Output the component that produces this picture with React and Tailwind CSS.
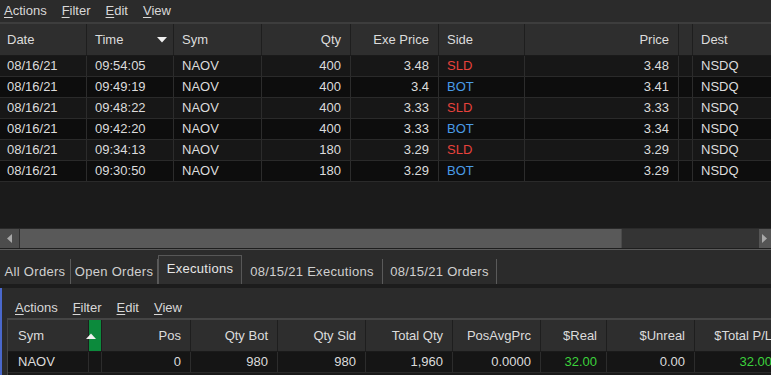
import React from "react";

const topRows = [
  ["08/16/21", "09:54:05", "NAOV", "400", "3.48", "SLD", "3.48", "NSDQ"],
  ["08/16/21", "09:49:19", "NAOV", "400", "3.4", "BOT", "3.41", "NSDQ"],
  ["08/16/21", "09:48:22", "NAOV", "400", "3.33", "SLD", "3.33", "NSDQ"],
  ["08/16/21", "09:42:20", "NAOV", "400", "3.33", "BOT", "3.34", "NSDQ"],
  ["08/16/21", "09:34:13", "NAOV", "180", "3.29", "SLD", "3.29", "NSDQ"],
  ["08/16/21", "09:30:50", "NAOV", "180", "3.29", "BOT", "3.29", "NSDQ"],
];

const tabs = [
  { label: "All Orders", w: "w-[71px]" },
  { label: "Open Orders", w: "w-[87px]" },
  { label: "Executions", w: "w-[84px]", active: true },
  { label: "08/15/21 Executions", w: "w-[141px]" },
  { label: "08/15/21 Orders", w: "w-[114px]" },
];

function Menu({ className = "" }) {
  return (
    <div className={"flex items-center gap-[15px] text-[#d8d8d8] " + className}>
      <span><span className="underline underline-offset-2">A</span>ctions</span>
      <span><span className="underline underline-offset-2">F</span>ilter</span>
      <span><span className="underline underline-offset-2">E</span>dit</span>
      <span><span className="underline underline-offset-2">V</span>iew</span>
    </div>
  );
}

function Cell({ children, right, className = "" }) {
  return (
    <div
      className={
        "flex items-center overflow-hidden whitespace-nowrap border-r border-[#1e1e1e] " +
        (right ? "justify-end pr-[9px] " : "pl-[8px] ") +
        className
      }
    >
      {children}
    </div>
  );
}

export default function App() {
  return (
    <div className="w-[771px] h-[375px] overflow-hidden bg-[#1b1b1b] text-[13px] text-[#dcdcdc] font-['Liberation_Sans',Arial,sans-serif] flex flex-col">
      {/* top panel */}
      <div className="h-[248px] flex flex-col">
        <Menu className="h-[22px] bg-[#2b2b2b] pl-[4px]" />
        <div className="h-[2px] bg-[#3d3d3d]" />

        {/* header */}
        <div className="h-[32px] grid grid-cols-[87px_87px_88px_89px_88px_86px_154px_14px_82px] bg-[#2e2e2e] border-b border-[#1a1a1a]">
          <Cell className="!pl-[7px]">Date</Cell>
          <Cell className="justify-between pr-[6px]">
            <span>Time</span>
            <svg width="10" height="6" viewBox="0 0 10 6">
              <path d="M0 0H10L5 5.5Z" fill="#f0f0f0" />
            </svg>
          </Cell>
          <Cell>Sym</Cell>
          <Cell right>Qty</Cell>
          <Cell right>Exe Price</Cell>
          <Cell>Side</Cell>
          <Cell right>Price</Cell>
          <Cell />
          <Cell className="border-r-0">Dest</Cell>
        </div>

        {/* rows */}
        {topRows.map((r, i) => (
          <div
            key={i}
            className={
              "h-[21px] grid grid-cols-[87px_87px_88px_89px_88px_86px_154px_14px_82px] border-b border-[#2a2a2a] " +
              (i % 2 === 0 ? "bg-[#171717]" : "bg-[#0d0d0d]")
            }
          >
            <Cell className="!pl-[7px] !border-[#2c2c2c]">{r[0]}</Cell>
            <Cell className="!border-[#2c2c2c]">{r[1]}</Cell>
            <Cell className="!border-[#2c2c2c]">{r[2]}</Cell>
            <Cell right className="!border-[#2c2c2c]">{r[3]}</Cell>
            <Cell right className="!border-[#2c2c2c]">{r[4]}</Cell>
            <Cell
              className={
                "!border-[#2c2c2c] " +
                (r[5] === "SLD" ? "text-[#e8423c]" : "text-[#4a9ce8]")
              }
            >
              {r[5]}
            </Cell>
            <Cell right className="!border-[#2c2c2c]">{r[6]}</Cell>
            <Cell className="!border-[#2c2c2c]" />
            <Cell className="border-r-0">{r[7]}</Cell>
          </div>
        ))}

        <div className="flex-1 bg-[#1b1b1b]" />

        {/* horizontal scrollbar */}
        <div className="h-[20px] flex bg-[#343434] border-t border-[#2a2a2a]">
          <div className="w-[20px] bg-[#4c4c4c] border-r border-[#2e2e2e] flex items-center justify-center">
            <svg width="6" height="9" viewBox="0 0 6 9">
              <path d="M5 0V9L0 4.5Z" fill="#a8a8a8" />
            </svg>
          </div>
          <div className="w-[602px] bg-[#595959] border-r border-[#4a4a4a]" />
          <div className="flex-1" />
          <div className="w-[12px] bg-[#555] flex items-center pl-[3px]">
            <svg width="6" height="9" viewBox="0 0 6 9">
              <path d="M0 0V9L5 4.5Z" fill="#a8a8a8" />
            </svg>
          </div>
        </div>
      </div>

      <div className="h-[1px] bg-[#1e1e1e]" />
      <div className="h-[1px] bg-[#5a5a5a]" />

      {/* tabs */}
      <div className="h-[34px] bg-[#2b2b2b] flex items-end pt-[5px] tracking-[0.3px]">
        {tabs.map((t) =>
          t.active ? (
            <div
              key={t.label}
              className={
                t.w +
                " h-[29px] self-end border border-b-0 border-[#575757] bg-[#2f2f2f] text-[#e6e6e6] flex items-center justify-center pb-[3px]"
              }
            >
              {t.label}
            </div>
          ) : (
            <div
              key={t.label}
              className={
                t.w +
                " h-[25px] border-r border-[#5a5a5a] text-[#d0d0d0] flex items-center justify-center"
              }
            >
              {t.label}
            </div>
          )
        )}
      </div>

      <div className="h-[4px] bg-[#1c1c1c]" />

      {/* bottom panel */}
      <div className="flex-1 bg-[#2b2b2b] border-l-2 border-[#4a68cc] flex flex-col">
        <Menu className="h-[30px] pl-[13px] pt-[9px]" />
        <div className="ml-[5px] flex-1 border-l border-t-2 border-[#454545] bg-[#1a1a1a] overflow-hidden">
          <div className="w-[800px]">
            <div className="h-[32px] grid grid-cols-[81px_13px_89px_87px_88px_87px_88px_66px_88px_87px] bg-[#2e2e2e] border-b border-[#1a1a1a]">
              <Cell className="!pl-[10px]">Sym</Cell>
              <div className="relative bg-[#0c8a3c] border-r border-[#1e1e1e]">
                <svg
                  className="absolute left-[-3px] top-[13px]"
                  width="10"
                  height="6"
                  viewBox="0 0 10 6"
                >
                  <path d="M0 6H10L5 0.5Z" fill="#f0f0f0" />
                </svg>
              </div>
              <Cell right>Pos</Cell>
              <Cell right>Qty Bot</Cell>
              <Cell right>Qty Sld</Cell>
              <Cell right>Total Qty</Cell>
              <Cell right>PosAvgPrc</Cell>
              <Cell right>$Real</Cell>
              <Cell right>$Unreal</Cell>
              <Cell right>$Total P/L</Cell>
            </div>
            <div className="h-[21px] grid grid-cols-[81px_13px_89px_87px_88px_87px_88px_66px_88px_87px] bg-[#151515] border-b border-[#2a2a2a]">
              <Cell className="!pl-[10px] !border-[#2c2c2c]">NAOV</Cell>
              <Cell className="!border-[#2c2c2c]" />
              <Cell right className="!border-[#2c2c2c]">0</Cell>
              <Cell right className="!border-[#2c2c2c]">980</Cell>
              <Cell right className="!border-[#2c2c2c]">980</Cell>
              <Cell right className="!border-[#2c2c2c]">1,960</Cell>
              <Cell right className="!border-[#2c2c2c]">0.0000</Cell>
              <Cell right className="!border-[#2c2c2c] text-[#3cd23c]">32.00</Cell>
              <Cell right className="!border-[#2c2c2c]">0.00</Cell>
              <Cell right className="!border-[#2c2c2c] text-[#3cd23c]">32.00</Cell>
            </div>
          </div>
        </div>
      </div>
    </div>
  );
}
